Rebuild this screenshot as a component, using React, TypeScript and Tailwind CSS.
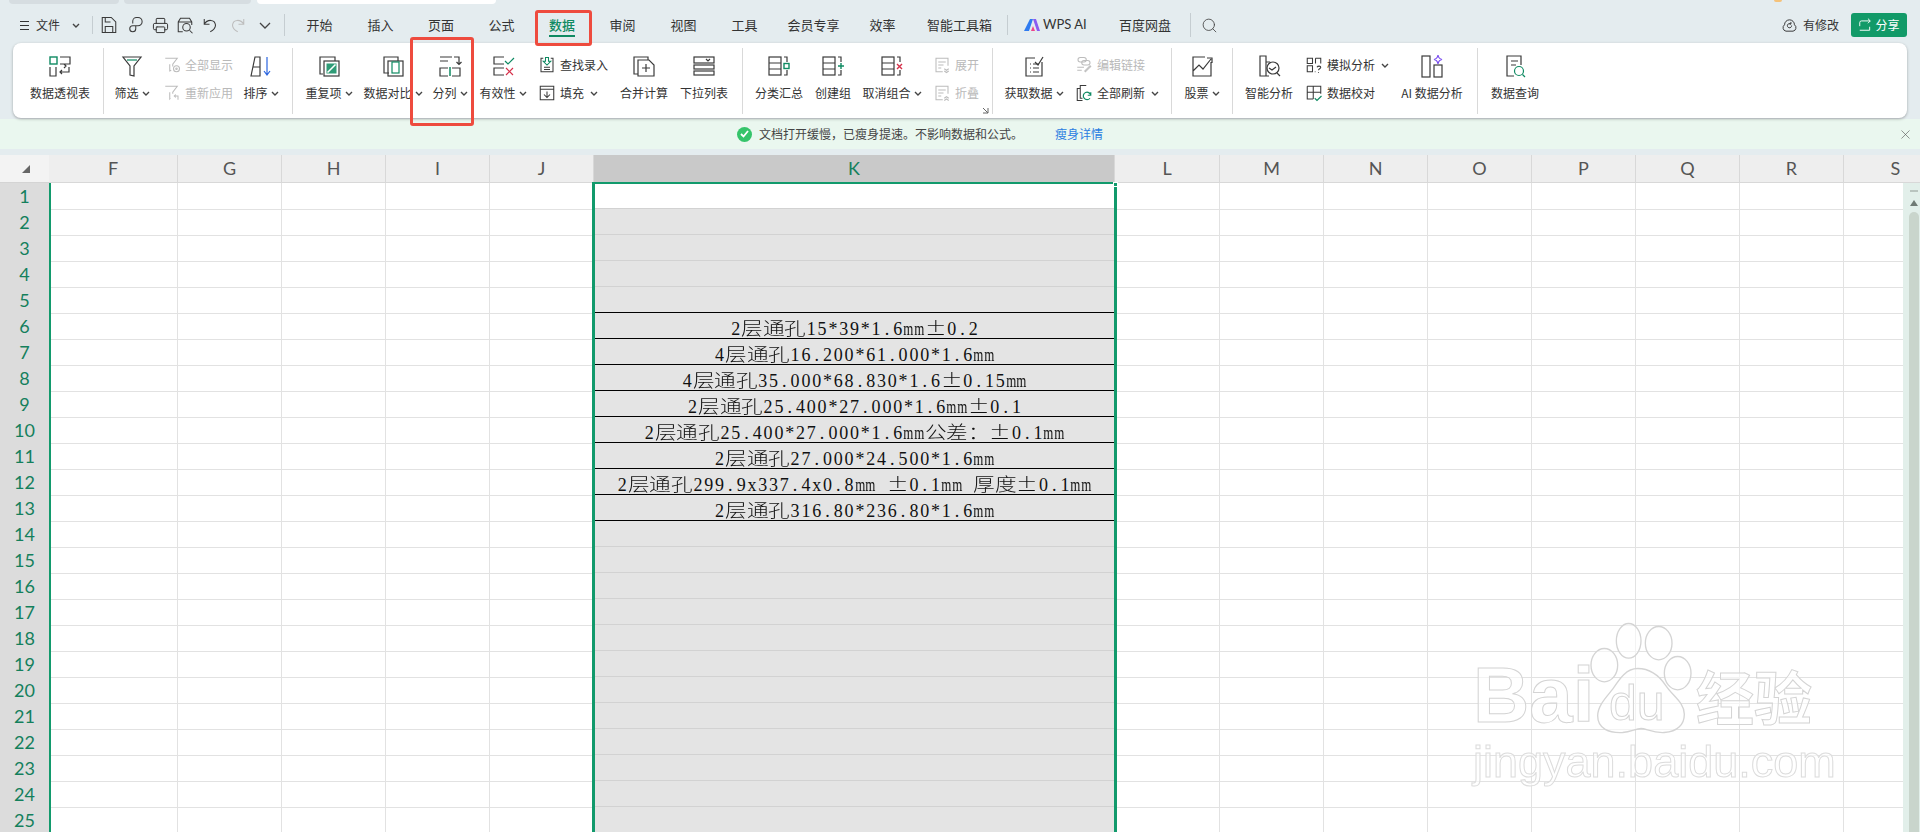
import type { ReactNode } from "react";
import { Printer, Search, X } from "lucide-react";

const GREEN = "#0f8a62";
const RED = "#d6304a";

const Icon = ({ children, size = 24, color = "#3a3a3a" }: { children: ReactNode; size?: number; color?: string }) => (
  <svg width={size} height={size} viewBox="0 0 24 24" fill="none" stroke={color} strokeWidth={size < 24 ? 1.4 : 1.2}>
    {children}
  </svg>
);

const Caret = ({ className = "ml-[3px]" }: { className?: string }) => (
  <svg width="8" height="5" viewBox="0 0 8 5" fill="none" stroke="#444" strokeWidth="1.4" className={className}>
    <path d="M1 1l3 3 3-3" />
  </svg>
);

// large button: icon on top, label below
const Big = ({ w, icon, label, caret }: { w: string; icon: ReactNode; label: string; caret?: boolean }) => (
  <div className={`${w} flex shrink-0 flex-col items-center`}>
    <div className="flex h-[24px] items-center justify-center">{icon}</div>
    <div className="mt-[5px] flex h-[20px] items-center whitespace-nowrap">
      {label}
      {caret && <Caret />}
    </div>
  </div>
);

const Small = ({ icon, label, caret, off }: { icon: ReactNode; label: string; caret?: boolean; off?: boolean }) => (
  <div className={`flex h-[24px] items-center whitespace-nowrap ${off ? "text-[#b9b9b9]" : ""}`}>
    <span className="flex w-[18px] justify-center">{icon}</span>
    <span className="ml-[4px]">{label}</span>
    {caret && <Caret className="ml-[6px]" />}
  </div>
);

const Stack = ({ w, children }: { w: string; children: ReactNode }) => (
  <div className={`${w} -mt-px flex shrink-0 flex-col gap-[4px]`}>{children}</div>
);

const Sep = ({ className = "" }: { className?: string }) => (
  <div className={`-mt-[6px] h-[66px] w-px shrink-0 bg-[#d9d9d9] ${className}`} />
);

const tableBase = (
  <>
    <rect x="2" y="3" width="12" height="18" />
    <path d="M2 9h12M2 15h12M17 3h3v5M17 21h3v-5" />
  </>
);

const Ribbon = () => (
  <div className="relative mx-[13px] flex h-[75px] items-start rounded-lg bg-white pl-1 pt-[11px] text-[12px] text-[#333] shadow-[0_1px_3px_rgba(0,0,0,0.3)]">
    <Big
      w="w-[86px]"
      label="数据透视表"
      icon={
        <Icon>
          <rect x="2" y="3" width="7" height="7" stroke={GREEN} strokeWidth="1.4" />
          <path d="M12 3h10v7H12M2 13v9h6v-9M21 13v5h-9M14 16l-2 2 2 2M16 14l2-2-2-2" />
        </Icon>
      }
    />
    <Sep />
    <Big
      w="w-[56px]"
      label="筛选"
      caret
      icon={
        <Icon>
          <path d="M3 3h18l-7 9v10l-4-1v-9z" />
          <path d="M7 6h10" stroke={GREEN} />
        </Icon>
      }
    />
    <Stack w="w-[80px] pl-[3px]">
      <Small
        off
        label="全部显示"
        icon={
          <Icon size={20} color="#bcbcbc">
            <path d="M3 3h16l-6 8v3M9 11v9l2-1" />
            <circle cx="18" cy="17" r="4" />
            <circle cx="18" cy="17" r="1" />
          </Icon>
        }
      />
      <Small
        off
        label="重新应用"
        icon={
          <Icon size={20} color="#bcbcbc">
            <path d="M3 3h16l-6 8v2M9 11v9l1-1M20 21v-5h-5M17 14l-2 2 2 2" />
          </Icon>
        }
      />
    </Stack>
    <Big
      w="w-[42px]"
      label="排序"
      caret
      icon={
        <Icon>
          <path d="M2 22L6 3h5v19zM4 13h7" />
          <path d="M18 3v18M15 17l3 4 3-4" stroke="#2c66e0" />
        </Icon>
      }
    />
    <Sep className="ml-[10px]" />
    <Big
      w="w-[72px]"
      label="重复项"
      caret
      icon={
        <Icon>
          <path d="M6 20H3V3h15v4" />
          <rect x="7" y="7" width="15" height="15" />
          <rect x="9.500" y="9.500" width="10" height="10" fill="#2f9c77" stroke="none" />
          <path d="M10.500 18.500l8-8" stroke="#fff" strokeWidth="1.6" />
        </Icon>
      }
    />
    <Big
      w="w-[56px]"
      label="数据对比"
      caret
      icon={
        <Icon>
          <path d="M8 19H3V3h14v4" />
          <rect x="7" y="7" width="15" height="15" />
          <rect x="11" y="8" width="7" height="11" stroke={GREEN} />
        </Icon>
      }
    />
    <Big
      w="w-[58px]"
      label="分列"
      caret
      icon={
        <Icon>
          <path d="M2 3h12M2 7h8M16 3h5v7M18.500 8l2.500 2.500L23.500 8M10 14H2v8h8M14 14h8v8h-8" />
          <path d="M12 13v9" stroke={GREEN} strokeWidth="1.5" />
        </Icon>
      }
    />
    <Big
      w="w-[48px]"
      label="有效性"
      caret
      icon={
        <Icon>
          <path d="M13 3H3v7h10M13 14H3v7h10" />
          <path d="M14 7l3 3 6-6" stroke={GREEN} />
          <path d="M15 14l7 7M22 14l-7 7" stroke={RED} />
        </Icon>
      }
    />
    <Stack w="w-[87px] pl-[11px]">
      <Small
        label="查找录入"
        icon={
          <Icon size={20}>
            <path d="M7 3H4v18h16V3h-3M8 15h8M8 18h8" />
            <path d="M10 2h4v5h3l-5 5-5-5h3z" stroke={GREEN} />
          </Icon>
        }
      />
      <Small
        caret
        label="填充"
        icon={
          <Icon size={20}>
            <path d="M3 3h18v18H3zM3 7h18" />
            <path d="M12 10v8M8 14l4 4 4-4" />
          </Icon>
        }
      />
    </Stack>
    <Big
      w="w-[60px]"
      label="合并计算"
      icon={
        <Icon>
          <path d="M6 20H2V3h14v3" />
          <path d="M6 6h11l5 5v11H6zM14 10v8M10 14h8" />
        </Icon>
      }
    />
    <Big
      w="w-[60px]"
      label="下拉列表"
      icon={
        <Icon>
          <rect x="2" y="3" width="20" height="6" />
          <rect x="2" y="11" width="20" height="4" />
          <rect x="2" y="17" width="20" height="4" />
          <path d="M14 5l2 2 2-2" />
        </Icon>
      }
    />
    <Sep className="ml-[8px]" />
    <Big
      w="w-[72px]"
      label="分类汇总"
      icon={
        <Icon>
          {tableBase}
          <rect x="17" y="9.500" width="5" height="5" stroke={GREEN} strokeWidth="1.4" />
        </Icon>
      }
    />
    <Big
      w="w-[36px]"
      label="创建组"
      icon={
        <Icon>
          {tableBase}
          <path d="M20 9v6M17 12h6" stroke={GREEN} strokeWidth="1.4" />
        </Icon>
      }
    />
    <Big
      w="w-[82px]"
      label="取消组合"
      caret
      icon={
        <Icon>
          {tableBase}
          <path d="M17 10l5 5M22 10l-5 5" stroke={RED} strokeWidth="1.4" />
        </Icon>
      }
    />
    <Stack w="w-[59px] relative">
      <Small
        off
        label="展开"
        icon={
          <Icon size={20} color="#bcbcbc">
            <path d="M20 13V3H4v18h9M7 8h10M7 12h7M7 16h4M15 17l3 2 3-2M15 20l3 2 3-2" />
          </Icon>
        }
      />
      <Small
        off
        label="折叠"
        icon={
          <Icon size={20} color="#bcbcbc">
            <path d="M20 13V3H4v18h9M7 8h10M7 12h7M7 16h4M15 19l3-2 3 2M15 22l3-2 3 2" />
          </Icon>
        }
      />
      <svg width="7" height="7" viewBox="0 0 7 7" fill="none" stroke="#666" className="absolute bottom-[-9px] right-[3px]">
        <path d="M1 1l5 5M1 6h5V1" />
      </svg>
    </Stack>
    <Sep />
    <Big
      w="w-[82px]"
      label="获取数据"
      caret
      icon={
        <Icon>
          <path d="M13 4H4v18h16V8M8 10h1M11 10h6M8 14h1M11 14h6M8 18h1M11 18h6" />
          <path d="M13 8l3 3 5-8" />
        </Icon>
      }
    />
    <Stack w="w-[96px]">
      <Small
        off
        label="编辑链接"
        icon={
          <Icon size={20} color="#bcbcbc">
            <rect x="4" y="2" width="11" height="6" rx="3" />
            <rect x="9" y="6" width="11" height="6" rx="3" />
            <path d="M3 15h9M3 19h6M14 21l7-7-1-1-7 7z" />
          </Icon>
        }
      />
      <Small
        caret
        label="全部刷新"
        icon={
          <Icon size={20}>
            <path d="M15 2H7v4M7 6H3v16h7M7 6v13h3" />
            <path d="M21 15a5 5 0 1 0-1 4M21 11v4h-4" stroke={GREEN} strokeWidth="1.6" />
          </Icon>
        }
      />
    </Stack>
    <Sep />
    <Big
      w="w-[60px]"
      label="股票"
      caret
      icon={
        <Icon>
          <path d="M15 3H3v19h18V8M3 17l6-6 4 4 8-10M17 4h5v5" />
        </Icon>
      }
    />
    <Sep />
    <Big
      w="w-[72px]"
      label="智能分析"
      icon={
        <Icon>
          <path d="M12 22H3V2h6v20M9 8h4" />
          <circle cx="16" cy="14" r="6" />
          <path d="M12 14l3 2 4-3M20 19l3 3" />
        </Icon>
      }
    />
    <Stack w="w-[91px]">
      <Small
        caret
        label="模拟分析"
        icon={
          <Icon size={20}>
            <path d="M3 3h7v7H3zM14 3h7v7M14 3v7M3 13h7v8H3zM14 21h-1" />
            <path d="M16 15c1-2 5-2 5 0 0 2-3 2-3 4M18 21.500v1" />
          </Icon>
        }
      />
      <Small
        label="数据校对"
        icon={
          <Icon size={20}>
            <path d="M3 3h18v10M3 3v17h8M11 3v17M3 11h18" />
            <path d="M13 19l3 3 6-6" stroke={GREEN} strokeWidth="1.6" />
          </Icon>
        }
      />
    </Stack>
    <Big
      w="w-[72px]"
      label="AI 数据分析"
      icon={
        <Icon>
          <rect x="2" y="2" width="8" height="21" />
          <rect x="14" y="11" width="8" height="12" />
          <path d="M18 1c.5 3 1.500 4 4 4.500-2.500.5-3.500 1.500-4 4.500-.5-3-1.500-4-4-4.500 2.500-.5 3.500-1.500 4-4.500z" stroke="#7a4df0" fill="#fff" />
        </Icon>
      }
    />
    <Sep className="ml-[9px]" />
    <Big
      w="w-[74px]"
      label="数据查询"
      icon={
        <Icon>
          <path d="M11 22H4V2h14v9M8 7h7M8 11h5" />
          <circle cx="16" cy="17" r="4.500" stroke={GREEN} />
          <path d="M19.500 20.500l2.500 2.500" stroke={GREEN} />
        </Icon>
      }
    />
  </div>
);

const tabs: [string, string][] = [
  ["开始", "w-[61px]"],
  ["插入", "w-[61px]"],
  ["页面", "w-[60px]"],
  ["公式", "w-[61px]"],
  ["数据", "w-[60px]"],
  ["审阅", "w-[61px]"],
  ["视图", "w-[61px]"],
  ["工具", "w-[61px]"],
  ["会员专享", "w-[77px]"],
  ["效率", "w-[61px]"],
  ["智能工具箱", "w-[93px]"],
];

const TitleBar = () => (
  <div className="flex h-[39px] items-center pt-[3px] text-[13px] text-[#333]">
    <div className="ml-[20px] flex w-[9px] flex-col gap-[3px]">
      <span className="h-px bg-[#333]" />
      <span className="h-px bg-[#333]" />
      <span className="h-px bg-[#333]" />
    </div>
    <span className="ml-[7px] w-[28px] text-[12px]">文件</span>
    <Caret className="ml-[8px]" />
    <div className="ml-[12px] h-[18px] w-px bg-[#c5cdd1]" />
    <div className="ml-[5px] flex w-[22px] justify-center">
      <Icon size={18}>
        <path d="M3 2h12l6 6v14H3zM7 2v6h7M7 22v-8h10v8" />
      </Icon>
    </div>
    <div className="ml-[5px] flex w-[20px] justify-center">
      <Icon size={18}>
        <path d="M9 10V7a5 5 0 0 1 5-5h2a5 5 0 0 1 0 11H9a4 4 0 1 0 4 4v-4" />
      </Icon>
    </div>
    <Printer size={17} strokeWidth={1.4} color="#333" className="ml-[7px]" />
    <div className="ml-[6px] flex w-[20px] justify-center">
      <Icon size={18}>
        <path d="M9 21H3V8l3-5h12l3 5v4M3 8h18" />
        <circle cx="14" cy="15" r="5" />
        <path d="M18 19l4 4" />
      </Icon>
    </div>
    <div className="ml-[7px] flex w-[18px] justify-center">
      <Icon size={18}>
        <path d="M3 4v7h7M3 11c4-7 14-7 15 1 0 4-3 7-7 9" />
      </Icon>
    </div>
    <div className="ml-[8px] flex w-[18px] justify-center">
      <Icon size={18} color="#bdbdbd">
        <path d="M21 4v7h-7M21 11c-4-7-14-7-15 1 0 4 3 7 7 9" />
      </Icon>
    </div>
    <svg width="12" height="7" viewBox="0 0 12 7" fill="none" stroke="#444" strokeWidth="1.3" className="ml-[13px]">
      <path d="M1 1l5 5 5-5" />
    </svg>
    <div className="ml-[13px] h-[22px] w-px bg-[#c5cdd1]" />
    <div className="ml-[4px] flex">
      {tabs.map(([t, w]) => (
        <div key={t} className={`${w} relative text-center ${t === "数据" ? "font-medium text-[#0f8a62]" : ""}`}>
          {t}
          {t === "数据" && <span className="absolute -bottom-[2px] left-[17px] h-[2px] w-[26px] bg-[#0f8a62]" />}
        </div>
      ))}
    </div>
    <div className="ml-[1px] h-[20px] w-px bg-[#c5cdd1]" />
    <svg width="16" height="14" viewBox="0 0 16 14" className="ml-[16px]">
      <path d="M0 13L6 1h3L5 13z" fill="#2f7bf0" />
      <path d="M7 13l2-5 2 5z" fill="#f0438a" />
      <path d="M9 1h3l4 12h-3z" fill="#8a5cf0" />
    </svg>
    <span className="ml-[3px] w-[47px] font-['Lato',sans-serif]">WPS AI</span>
    <div className="ml-[29px] w-[52px] text-center">百度网盘</div>
    <div className="ml-[19px] h-[24px] w-px bg-[#c5cdd1]" />
    <Search size={17} strokeWidth={1.2} color="#444" className="ml-[10px]" />
    <div className="ml-auto flex items-center text-[12px]">
      <Icon size={17}>
        <path d="M7 20a5 5 0 0 1-2-9 7 7 0 0 1 14 0 5 5 0 0 1-2 9z" />
        <path d="M15 12a3 3 0 1 1-1-2M14 7v3h-2" />
      </Icon>
      <span className="ml-[5px]">有修改</span>
      <div className="ml-[12px] mr-[13px] flex h-[24px] w-[56px] items-center justify-center rounded-[3px] bg-[#129a68] text-white">
        <svg width="14" height="14" viewBox="0 0 24 24" fill="none" stroke="#fff" strokeWidth="1.6">
          <path d="M3 14V8a3 3 0 0 1 3-3h15M17 1l4 4-4 4M3 21h17v-6" />
        </svg>
        <span className="ml-[3px]">分享</span>
      </div>
    </div>
  </div>
);

const Notice = () => (
  <div className="mt-px flex h-[30px] items-center bg-[#eaf7ef] pl-[737px] text-[12px] text-[#444]">
    <span className="flex h-[15px] w-[15px] items-center justify-center rounded-full bg-[#35c46a]">
      <svg width="9" height="8" viewBox="0 0 9 8" fill="none" stroke="#fff" strokeWidth="1.8">
        <path d="M1 4l2.500 2.500L8 1" />
      </svg>
    </span>
    <span className="ml-[7px] w-[296px] whitespace-nowrap">文档打开缓慢，已瘦身提速。不影响数据和公式。</span>
    <span className="text-[#2a7de1]">瘦身详情</span>
    <X size={15} strokeWidth={1} color="#555" className="ml-auto mr-[7px]" />
  </div>
);

// cell text: song-style fixed half/full width pitch
const CellText = ({ text }: { text: string }) => (
  <span className="whitespace-pre font-['Liberation_Serif',serif] text-[18px] leading-none text-[#111]">
    {[...text].map((c, i) =>
      c.charCodeAt(0) > 127 ? (
        <span key={i} className="inline-block w-[21.6px] scale-x-[1.2] text-center font-['Noto_Sans_CJK_SC',sans-serif] font-light">
          {c}
        </span>
      ) : (
        <span key={i} className={`inline-block w-[10.8px] text-center ${c === "m" ? "scale-x-[0.72]" : ""}`}>
          {c === "m" ? <span className="-mx-[4px]">m</span> : c}
        </span>
      )
    )}
  </span>
);

const GRID = "grid grid-cols-[49px_129px_repeat(4,104px)_521px_105px_repeat(7,104px)]";
const letters = ["F", "G", "H", "I", "J", "K", "L", "M", "N", "O", "P", "Q", "R", "S"];
const kText: Record<number, string> = {
  6: "2层通孔15*39*1.6mm±0.2",
  7: "4层通孔16.200*61.000*1.6mm",
  8: "4层通孔35.000*68.830*1.6±0.15mm",
  9: "2层通孔25.400*27.000*1.6mm±0.1",
  10: "2层通孔25.400*27.000*1.6mm公差：±0.1mm",
  11: "2层通孔27.000*24.500*1.6mm",
  12: "2层通孔299.9x337.4x0.8mm ±0.1mm 厚度±0.1mm",
  13: "2层通孔316.80*236.80*1.6mm",
};
const rows = Array.from({ length: 25 }, (_, i) => i + 1);

const Sheet = () => (
  <div className="relative mt-[6px] h-[677px] overflow-hidden bg-white font-['Lato',sans-serif]">
    <div className={`${GRID} h-[28px] bg-[#eeeeee] text-[18px] text-[#555]`}>
      <div className="flex items-end justify-end border-b border-[#d4d4d4] bg-[#f3f3f3] pb-[9px] pr-[19px]">
        <span className="h-0 w-0 border-b-[8px] border-l-[8px] border-b-[#666] border-l-transparent" />
      </div>
      {letters.map((l) => (
        <div
          key={l}
          className={`flex items-center justify-center border-b border-r border-[#d8d8d8] ${
            l === "K" ? "bg-[#c9c9c9] text-[#14805c]" : ""
          }`}
        >
          {l}
        </div>
      ))}
    </div>
    <div className="flex">
      <div className="min-w-0 flex-1 overflow-hidden">
        {rows.map((r) => (
          <div key={r} className={`${GRID} h-[26px]`}>
            <div className="flex items-center justify-center bg-[#dcdcdc] text-[18px] text-[#14805c]">{r}</div>
            {letters.map((l) =>
              l === "K" ? (
                <div key={l} className={`flex flex-col ${r === 1 ? "bg-white" : "bg-[#e4e4e4]"}`}>
                  <div className="flex h-[25px] items-center justify-center pt-[5px]">
                    {kText[r] && <CellText text={kText[r]} />}
                  </div>
                  <div className={`h-px ${r >= 5 && r <= 13 ? "bg-black" : "bg-[#d2d2d2]"}`} />
                </div>
              ) : (
                <div key={l} className={`border-b border-r border-[#e2e2e2] ${l === "F" ? "border-l-2 border-l-[#129a6c]" : ""}`} />
              )
            )}
          </div>
        ))}
      </div>
      <div className="flex w-[17px] shrink-0 flex-col items-center bg-[#e2efea] pl-[5px]">
        <span className="mt-[7px] h-[2px] w-[8px] bg-[#b9c4bf]" />
        <span className="mt-[8px] h-0 w-0 border-x-[4px] border-b-[6px] border-x-transparent border-b-[#6f7a75]" />
        <span className="mt-[6px] h-[620px] w-[10px] rounded-t-[5px] bg-[#c9d5cc]" />
      </div>
    </div>
    {/* selected column frame */}
    <div className="absolute bottom-0 left-[592px] top-[27px] w-[525px] border-x-[3px] border-t-[2px] border-[#129a6c]">
      <span className="absolute -right-[4px] -top-[2px] h-[5px] w-[5px] border border-white bg-[#129a6c]" />
    </div>
    {/* watermark */}
    <div className="pointer-events-none absolute left-[1473px] top-[469px] h-[170px] w-[350px] blur-[0.6px]">
      <span className="absolute left-[0px] top-[32px] font-['Liberation_Sans',sans-serif] text-[78px] font-bold leading-none text-white/60 [-webkit-text-stroke:1px_#d4d4d4]">
        Bai
      </span>
      <svg width="110" height="117" viewBox="500 70 330 350" fill="#ffffff99" stroke="#d4d4d4" strokeWidth="4" className="absolute left-[113px] -top-[5px]">
        <ellipse cx="555" cy="208" rx="40" ry="50" />
        <ellipse cx="628" cy="135" rx="37" ry="52" />
        <ellipse cx="718" cy="142" rx="40" ry="50" />
        <ellipse cx="775" cy="232" rx="40" ry="50" />
        <path d="M655 218C620 218 600 250 580 280C560 305 535 330 535 360C535 400 570 412 610 410C635 408 650 398 665 398C680 398 700 412 735 410C775 408 795 385 795 355C795 320 760 300 740 270C720 240 695 218 655 218Z" />
      </svg>
      <span className="absolute left-[136px] top-[54px] font-['Liberation_Sans',sans-serif] text-[50px] leading-none text-white/60 [-webkit-text-stroke:1px_#d4d4d4]">
        du
      </span>
      <span className="absolute left-[223px] top-[42px] font-['Noto_Sans_CJK_SC',sans-serif] text-[58px] font-bold leading-none text-white/60 [-webkit-text-stroke:1px_#d4d4d4]">
        经验
      </span>
      <span className="absolute left-[0px] top-[115px] whitespace-nowrap font-['Liberation_Sans',sans-serif] text-[45px] leading-none text-white/60 [-webkit-text-stroke:1px_#dcdcdc]">
        jingyan.baidu.com
      </span>
    </div>
  </div>
);

export default function App() {
  return (
    <div className="relative h-[832px] w-[1920px] overflow-hidden bg-[#e4ecef] font-['Noto_Sans_CJK_SC','Liberation_Sans',sans-serif]">
      <div className="flex h-[4px]">
        <div className="ml-[9px] w-[110px] rounded-b-md bg-[#d6dde1]" />
        <div className="ml-[5px] w-[127px] rounded-b-md bg-[#d6dde1]" />
        <div className="ml-[6px] w-[239px] rounded-b-md bg-white" />
        <div className="ml-auto mr-[138px] h-[2px] w-[8px] rounded-b-full bg-[#f5c27a]" />
      </div>
      <TitleBar />
      <Ribbon />
      <Notice />
      <Sheet />
      {/* red annotation boxes */}
      <div className="absolute left-[535px] top-[10px] h-[36px] w-[57px] rounded-[3px] border-[3px] border-[#ee4b3e]" />
      <div className="absolute left-[410px] top-[37px] h-[89px] w-[64px] rounded-[3px] border-[3px] border-[#ee4b3e]" />
    </div>
  );
}
